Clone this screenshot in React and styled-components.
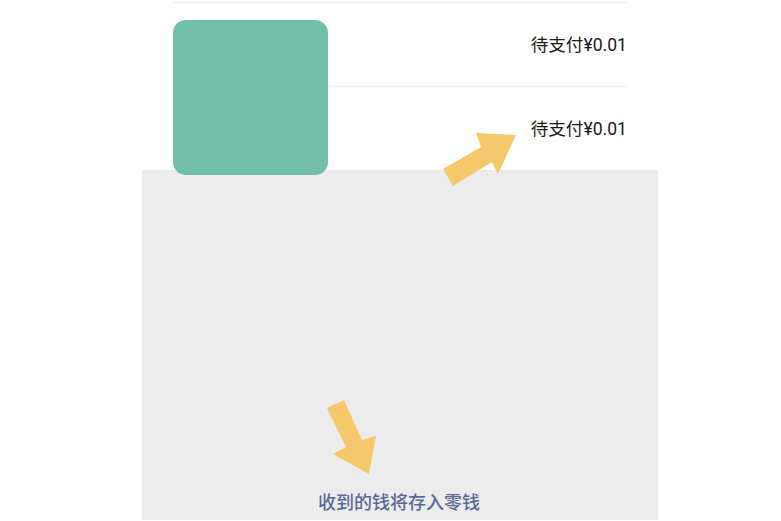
import React from "react";
import styled, { createGlobalStyle } from "styled-components";

const Global = createGlobalStyle`
  html, body { margin: 0; padding: 0; background: #ffffff; }
  body { font-family: "Noto Sans CJK SC", "Noto Sans", sans-serif; overflow: hidden; }
`;

const Page = styled.div`
  position: relative;
  width: 781px;
  height: 521px;
  overflow: hidden;
  background: #ffffff;
`;

const Sheet = styled.div`
  margin-left: 142px;
  width: 516px;
  display: flex;
  flex-direction: column;
`;

const List = styled.div`
  padding: 2px 31px 0;
  display: flex;
  flex-direction: column;
`;

const Row = styled.div`
  height: 84px;
  display: flex;
  align-items: center;
  justify-content: flex-end;
  border-top: 1px solid #efefef;
  padding-top: 3px;
  margin-left: ${(p) => p.$indent || 0}px;
  box-sizing: border-box;
`;

const Price = styled.span`
  font-family: "Roboto", "Noto Sans CJK SC", sans-serif;
  font-size: 17.6px;
  color: #1a1a1a;
  line-height: 1;
`;

const Panel = styled.div`
  background: #ececec;
  height: 350px;
  display: flex;
  flex-direction: column;
  justify-content: flex-end;
  align-items: center;
  padding-bottom: 10px;
  box-sizing: border-box;
`;

const Note = styled.div`
  font-size: 18px;
  font-weight: 500;
  color: #5a6a95;
  line-height: 1;
  margin-left: -2px;
`;

const Thumb = styled.div`
  position: absolute;
  left: 173px;
  top: 20px;
  width: 155px;
  height: 155px;
  border-radius: 13px;
  background: #72bfa9;
`;

const Overlay = styled.svg`
  position: absolute;
  left: 0;
  top: 0;
  pointer-events: none;
`;

export default function App() {
  return (
    <Page>
      <Global />
      <Sheet>
        <List>
          <Row>
            <Price>待支付¥0.01</Price>
          </Row>
          <Row $indent={155}>
            <Price>待支付¥0.01</Price>
          </Row>
        </List>
        <Panel>
          <Note>收到的钱将存入零钱</Note>
        </Panel>
      </Sheet>
      <Thumb />
      <Overlay width="781" height="521" viewBox="0 0 781 521">
        <polygon
          fill="#f5c86c"
          points="443,169 481,147 476,133 516,135 498,174 492,162 453,186"
        />
        <polygon
          fill="#f5c86c"
          points="327,408 344,400 362,440 376,436 369,474 333,454 346,447"
        />
      </Overlay>
    </Page>
  );
}
